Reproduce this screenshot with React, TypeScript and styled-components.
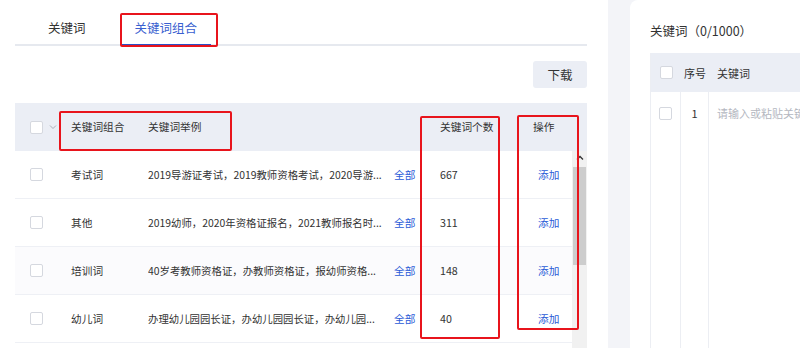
import styled, { createGlobalStyle } from "styled-components";

const GlobalStyle = createGlobalStyle`
    html, body {
        margin: 0;
        padding: 0;
        background: #f3f4f8;
    }
    body {
        font-family: "Noto Sans CJK SC", "Noto Sans", sans-serif;
        color: #333;
    }
`;

const ROWS = [
    { name: "考试词", example: "2019导游证考试，2019教师资格考试，2020导游...", count: 667 },
    { name: "其他", example: "2019幼师，2020年资格证报名，2021教师报名时...", count: 311 },
    { name: "培训词", example: "40岁考教师资格证，办教师资格证，报幼师资格...", count: 148 },
    { name: "幼儿词", example: "办理幼儿园园长证，办幼儿园园长证，办幼儿园...", count: 40 },
];

// red annotation boxes drawn over the screenshot
const MARKS = [
    { x: 120, y: 13, w: 98, h: 34 },
    { x: 59, y: 111, w: 173, h: 40 },
    { x: 420, y: 116, w: 80, h: 223 },
    { x: 517, y: 115, w: 62, h: 215 },
];

export default function App() {
    return (
        <Page>
            <GlobalStyle />
            <LeftPanel>
                <TabBar>
                    <Tab>关键词</Tab>
                    <Tab $active>关键词组合</Tab>
                </TabBar>

                <Toolbar>
                    <DownloadButton>下载</DownloadButton>
                </Toolbar>

                <Table>
                    <HeaderRow>
                        <CheckCell>
                            <Checkbox />
                            <svg width='8' height='6' viewBox='0 0 8 6'>
                                <polyline
                                    points='1,1.5 4,4.5 7,1.5'
                                    fill='none'
                                    stroke='#a9adb8'
                                    strokeWidth='1'
                                />
                            </svg>
                        </CheckCell>
                        <Cell>关键词组合</Cell>
                        <Cell>关键词举例</Cell>
                        <Cell />
                        <Cell>关键词个数</Cell>
                        <ActionCell $head>操作</ActionCell>
                    </HeaderRow>

                    <TableBody>
                        <Rows>
                            {ROWS.map((row, i) => (
                                <BodyRow key={row.name} $shaded={i === 2}>
                                    <CheckCell>
                                        <Checkbox />
                                    </CheckCell>
                                    <Cell>{row.name}</Cell>
                                    <ExampleCell>
                                        <ExampleText>{row.example}</ExampleText>
                                    </ExampleCell>
                                    <LinkCell>全部</LinkCell>
                                    <Cell>{row.count}</Cell>
                                    <ActionCell>
                                        <Link>添加</Link>
                                    </ActionCell>
                                </BodyRow>
                            ))}
                        </Rows>
                        <Scrollbar>
                            <ScrollArrow>
                                <svg width='8' height='6' viewBox='0 0 8 6'>
                                    <polyline
                                        points='1,4.5 4,1.5 7,4.5'
                                        fill='none'
                                        stroke='#333'
                                        strokeWidth='1.3'
                                    />
                                </svg>
                            </ScrollArrow>
                            <ScrollThumb />
                        </Scrollbar>
                    </TableBody>
                </Table>
            </LeftPanel>

            <RightPanel>
                <PanelTitle>关键词（0/1000）</PanelTitle>
                <KeywordTable>
                    <KeywordHeader>
                        <KwCheckCell>
                            <Checkbox />
                        </KwCheckCell>
                        <KwIndexCell>序号</KwIndexCell>
                        <KwTextCell>关键词</KwTextCell>
                    </KeywordHeader>
                    <KeywordBody>
                        <KwColumn>
                            <KwCheckCell>
                                <Checkbox />
                            </KwCheckCell>
                        </KwColumn>
                        <KwColumn>
                            <KwIndexCell>1</KwIndexCell>
                        </KwColumn>
                        <KwColumn>
                            <KwTextCell $placeholder>请输入或粘贴关键词</KwTextCell>
                        </KwColumn>
                    </KeywordBody>
                </KeywordTable>
            </RightPanel>

            {MARKS.map((m, i) => (
                <Mark key={i} $x={m.x} $y={m.y} $w={m.w} $h={m.h} />
            ))}
        </Page>
    );
}

const Page = styled.div`
    position: relative;
    display: flex;
    height: 348px;
    overflow: hidden;
    background: #f3f4f8;
`;

const LeftPanel = styled.div`
    width: 608px;
    flex-shrink: 0;
    box-sizing: border-box;
    padding: 0 21px 0 15px;
    background: #fff;
`;

const TabBar = styled.div`
    display: flex;
    gap: 21px;
    height: 46px;
    box-sizing: border-box;
    padding-left: 19px;
    border-bottom: 2px solid #e6e9ef;
`;

const Tab = styled.div<{ $active?: boolean }>`
    display: flex;
    align-items: center;
    box-sizing: border-box;
    height: 46px;
    padding: 10px 14px 0;
    margin-bottom: -2px;
    font-size: 12.5px;
    color: ${(p) => (p.$active ? "#3a5fd0" : "#333")};
    border-bottom: 2px solid ${(p) => (p.$active ? "#2d4fc4" : "transparent")};
`;

const Toolbar = styled.div`
    display: flex;
    justify-content: flex-end;
    padding-top: 15px;
`;

const DownloadButton = styled.button`
    width: 54px;
    height: 27px;
    border: none;
    border-radius: 3px;
    background: #ebeef5;
    font-family: inherit;
    font-size: 12.5px;
    color: #333;
    padding: 0;
`;

const Table = styled.div`
    margin-top: 15px;
`;

const columns = "56px 77px 246px 46px 70px 1fr";

const HeaderRow = styled.div`
    display: grid;
    grid-template-columns: ${columns};
    align-items: center;
    height: 48px;
    background: #ebeef5;
    font-size: 10.7px;
    color: #333;
`;

const TableBody = styled.div`
    display: flex;
`;

const Rows = styled.div`
    flex: 1;
    min-width: 0;
`;

const BodyRow = styled.div<{ $shaded?: boolean }>`
    display: grid;
    grid-template-columns: ${columns};
    align-items: center;
    height: 47px;
    border-bottom: 1px solid #eef0f5;
    background: ${(p) => (p.$shaded ? "#fbfbfd" : "#fff")};
    font-size: 10.7px;
    color: #333;
`;

const Cell = styled.div`
    line-height: 16px;
    white-space: nowrap;
`;

const CheckCell = styled.div`
    display: flex;
    align-items: center;
    gap: 6px;
    padding-left: 15px;
`;

const ExampleCell = styled(Cell)`
    min-width: 0;
    padding-right: 6px;
`;

const ExampleText = styled.div`
    overflow: hidden;
    text-overflow: ellipsis;
    white-space: nowrap;
    font-size: 10.4px;
`;

const LinkCell = styled(Cell)`
    color: #2a5bd7;
`;

const ActionCell = styled(Cell)<{ $head?: boolean }>`
    padding-left: ${(p) => (p.$head ? "23px" : "28px")};
`;

const Link = styled.span`
    color: #2a5bd7;
`;

const Checkbox = styled.span`
    display: inline-block;
    width: 13px;
    height: 13px;
    box-sizing: border-box;
    border: 1px solid #d5d8df;
    border-radius: 2px;
    background: #fff;
`;

const Scrollbar = styled.div`
    width: 15px;
    height: 200px;
    background: #f1f1f1;
`;

const ScrollArrow = styled.div`
    display: flex;
    justify-content: center;
    padding-top: 4px;
    height: 13px;
    box-sizing: border-box;
`;

const ScrollThumb = styled.div`
    margin: 3px 1px 0 1px;
    height: 98px;
    background: #cdcdcd;
`;

const RightPanel = styled.div`
    flex: 1;
    display: flex;
    flex-direction: column;
    margin-left: 22px;
    padding-left: 20px;
    background: #fff;
    border-top-left-radius: 8px;
`;

const PanelTitle = styled.div`
    display: flex;
    align-items: center;
    box-sizing: border-box;
    height: 53px;
    padding-top: 7px;
    font-size: 12.5px;
    color: #333;
    white-space: nowrap;
`;

const KeywordTable = styled.div`
    flex: 1;
    display: flex;
    flex-direction: column;
    border-left: 1px solid #eceef3;
`;

const kwColumns = "30px 28px 1fr";

const KeywordHeader = styled.div`
    display: grid;
    grid-template-columns: ${kwColumns};
    align-items: center;
    height: 39px;
    background: #ebeef5;
    font-size: 11px;
`;

const KeywordBody = styled.div`
    flex: 1;
    display: grid;
    grid-template-columns: ${kwColumns};
`;

const KwColumn = styled.div`
    border-right: 1px solid #eceef3;
    &:last-child {
        border-right: none;
    }
`;

const KwCheckCell = styled.div`
    display: flex;
    align-items: center;
    justify-content: center;
    height: 42px;
    ${KeywordHeader} & {
        height: auto;
    }
`;

const KwIndexCell = styled.div`
    display: flex;
    align-items: center;
    justify-content: center;
    height: 42px;
    font-size: 11px;
    white-space: nowrap;
    ${KeywordHeader} & {
        height: auto;
    }
`;

const KwTextCell = styled.div<{ $placeholder?: boolean }>`
    display: flex;
    align-items: center;
    height: 42px;
    padding-left: 8px;
    font-size: 11px;
    white-space: nowrap;
    color: ${(p) => (p.$placeholder ? "#b4b7bf" : "#333")};
    ${KeywordHeader} & {
        height: auto;
    }
`;

const Mark = styled.div<{ $x: number; $y: number; $w: number; $h: number }>`
    position: absolute;
    left: ${(p) => p.$x}px;
    top: ${(p) => p.$y}px;
    width: ${(p) => p.$w}px;
    height: ${(p) => p.$h}px;
    box-sizing: border-box;
    border: 2px solid #e8141c;
    border-radius: 2px;
    pointer-events: none;
`;
